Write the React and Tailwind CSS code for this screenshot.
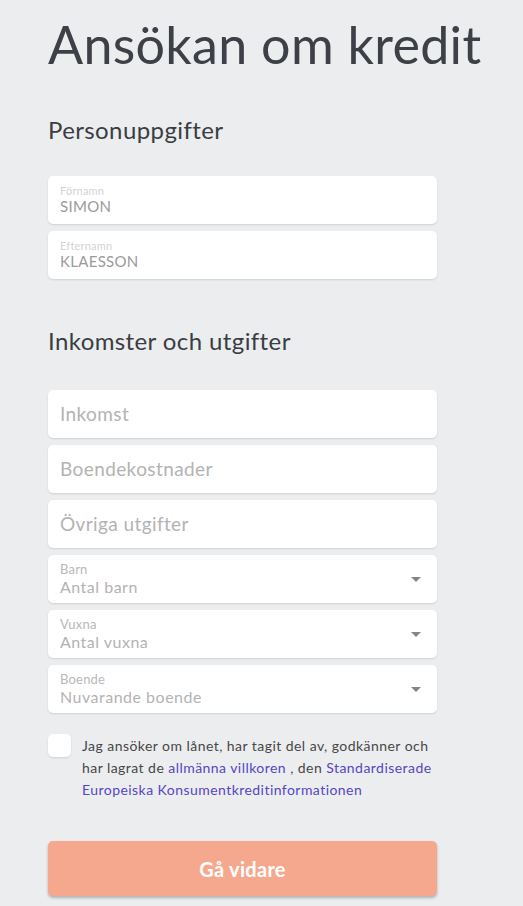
import React from "react";

const font = { fontFamily: "Lato, 'Noto Sans', sans-serif" };

function TextField({ label, value }) {
  return (
    <div className="h-12 w-full rounded-[5px] bg-white px-3 shadow-[0_1px_2px_rgba(0,0,0,0.12)] flex flex-col justify-center">
      <span className="text-[11px] leading-[13px] tracking-[0.2px] text-[#d3d3d3]">{label}</span>
      <span className="text-[15px] leading-[19px] tracking-[0.3px] text-[#9b9b9b]">{value}</span>
    </div>
  );
}

function Placeholder({ text }) {
  return (
    <div className="h-12 w-full rounded-[5px] bg-white px-3 shadow-[0_1px_2px_rgba(0,0,0,0.12)] flex items-center">
      <span className="text-[19px] tracking-[0.4px] text-[#b3b3b3]">{text}</span>
    </div>
  );
}

function SelectField({ label, value }) {
  return (
    <div className="h-12 w-full rounded-[5px] bg-white pl-3 pr-4 shadow-[0_1px_2px_rgba(0,0,0,0.12)] flex items-center">
      <div className="flex flex-1 flex-col">
        <span className="text-[13px] leading-[15px] tracking-[0.2px] text-[#b8b8b8]">{label}</span>
        <span className="text-[16px] leading-[20px] tracking-[0.5px] text-[#b3b3b3]">{value}</span>
      </div>
      <svg width="10" height="5" viewBox="0 0 10 5">
        <path d="M0 0h10L5 5z" fill="#858585" />
      </svg>
    </div>
  );
}

export default function App() {
  return (
    <div className="min-h-screen overflow-hidden bg-[#ecedef]" style={font}>
      <div className="ml-12 flex w-[389px] flex-col pt-[8px]">
        <h1 className="whitespace-nowrap text-[52px] leading-[72px] tracking-[0.3px] text-[#3d4046]">
          Ansökan om kredit
        </h1>

        <h2 className="mt-[35px] text-[24px] leading-[30px] tracking-[0.4px] text-[#3a3d42]">Personuppgifter</h2>
        <div className="mt-[31px] flex flex-col gap-[7px]">
          <TextField label="Förnamn" value="SIMON" />
          <TextField label="Efternamn" value="KLAESSON" />
        </div>

        <h2 className="mt-[47px] text-[24px] leading-[30px] tracking-[0.4px] text-[#3a3d42]">
          Inkomster och utgifter
        </h2>
        <div className="mt-[34px] flex flex-col gap-[7px]">
          <Placeholder text="Inkomst" />
          <Placeholder text="Boendekostnader" />
          <Placeholder text="Övriga utgifter" />
          <SelectField label="Barn" value="Antal barn" />
          <SelectField label="Vuxna" value="Antal vuxna" />
          <SelectField label="Boende" value="Nuvarande boende" />
        </div>

        <div className="mt-[21px] flex gap-[11px]">
          <div className="h-[23px] w-[23px] shrink-0 rounded-[5px] bg-white shadow-[0_1px_2px_rgba(0,0,0,0.12)]" />
          <p className="mt-[1px] text-[14px] leading-[22px] tracking-[0.45px] text-[#474747]">
            Jag ansöker om lånet, har tagit del av, godkänner och har lagrat de{" "}
            <span className="text-[#5447c2]">allmänna villkoren</span> , den{" "}
            <span className="text-[#5447c2]">Standardiserade Europeiska Konsumentkreditinformationen</span>
          </p>
        </div>

        <button className="mt-[40px] h-[55px] w-full rounded-[5px] bg-[#f6a88f] text-[20px] font-bold tracking-[0.3px] text-white shadow-[0_2px_3px_rgba(0,0,0,0.25)]">
          Gå vidare
        </button>
      </div>
    </div>
  );
}
